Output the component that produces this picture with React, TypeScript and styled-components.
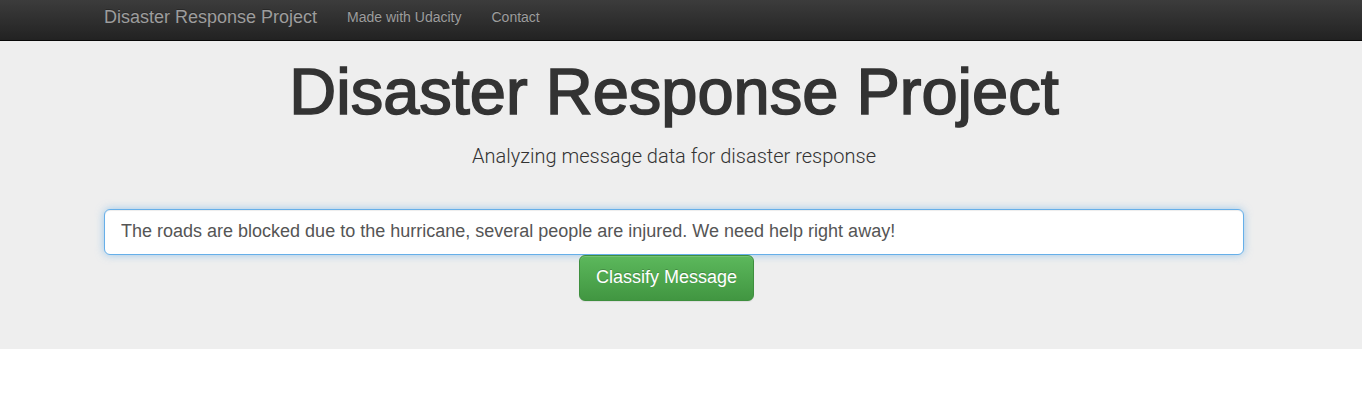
import React from "react";
import styled, { createGlobalStyle } from "styled-components";

const GlobalStyle = createGlobalStyle`
  html, body { margin: 0; padding: 0; background: #fff; }
  body {
    font-family: "Liberation Sans", Arial, sans-serif;
    font-size: 14px;
    line-height: 1.42857;
    color: #333;
  }
  * { box-sizing: border-box; }
`;

const Page = styled.div``;

const Navbar = styled.nav`
  height: 41px;
  background-image: linear-gradient(to bottom, #3c3c3c 0, #222 100%);
  border-bottom: 1px solid #080808;
  padding-right: 14px;
`;

const Container = styled.div`
  width: 1170px;
  margin: 0 auto;
  padding: 0 15px;
`;

const NavInner = styled(Container)`
  display: flex;
  align-items: flex-start;
`;

const Brand = styled.a`
  font-size: 18px;
  line-height: 20px;
  padding: 7px 15px 0 0;
  color: #9d9d9d;
  text-decoration: none;
  text-shadow: 0 -1px 0 rgba(0, 0, 0, 0.25);
`;

const NavList = styled.ul`
  display: flex;
  list-style: none;
  margin: 0;
  padding: 0;
`;

const NavLink = styled.a`
  display: block;
  font-size: 14px;
  line-height: 20px;
  padding: 7px 15px 0;
  color: #9d9d9d;
  text-decoration: none;
  text-shadow: 0 -1px 0 rgba(0, 0, 0, 0.25);
`;

const Jumbotron = styled.section`
  background: #eee;
  padding: 15px 14px 48px 0;
`;

const Title = styled.h1`
  margin: 0;
  text-align: center;
  font-size: 65px;
  line-height: 1.1;
  font-weight: 400;
  color: #333;
  -webkit-text-stroke: 1.6px #333;
`;

const Lead = styled.p`
  margin: 14px 0 0;
  text-align: center;
  font-family: Roboto, "Liberation Sans", sans-serif;
  font-size: 20px;
  font-weight: 300;
  line-height: 1.4;
  color: #333;
`;

const Form = styled.form`
  margin-top: 39px;
  display: flex;
  flex-direction: column;
`;

const Input = styled.input`
  display: block;
  width: 100%;
  height: 46px;
  padding: 10px 16px;
  font-family: "Liberation Sans", Arial, sans-serif;
  font-size: 18px;
  line-height: 1.33;
  color: #555;
  background: #fff;
  border: 1px solid #66afe9;
  border-radius: 6px;
  outline: 0;
  box-shadow: inset 0 1px 1px rgba(0, 0, 0, 0.075), 0 0 8px rgba(102, 175, 233, 0.6);
`;

const ButtonRow = styled.div`
  display: flex;
  padding-left: 475px;
`;

const Button = styled.button`
  height: 46px;
  padding: 10px 16px;
  font-family: "Liberation Sans", Arial, sans-serif;
  font-size: 18px;
  line-height: 1.33;
  color: #fff;
  background-image: linear-gradient(to bottom, #5cb85c 0, #419641 100%);
  border: 1px solid #3e8f3e;
  border-radius: 6px;
  text-shadow: 0 -1px 0 rgba(0, 0, 0, 0.2);
  box-shadow: inset 0 1px 0 rgba(255, 255, 255, 0.15), 0 1px 1px rgba(0, 0, 0, 0.075);
  cursor: pointer;
`;

export default function App() {
  return (
    <Page>
      <GlobalStyle />
      <Navbar>
        <NavInner>
          <Brand href="#">Disaster Response Project</Brand>
          <NavList>
            <li><NavLink href="#">Made with Udacity</NavLink></li>
            <li><NavLink href="#">Contact</NavLink></li>
          </NavList>
        </NavInner>
      </Navbar>
      <Jumbotron>
        <Container>
          <Title>Disaster Response Project</Title>
          <Lead>Analyzing message data for disaster response</Lead>
          <Form onSubmit={(e) => e.preventDefault()}>
            <Input
              type="text"
              defaultValue="The roads are blocked due to the hurricane, several people are injured. We need help right away!"
            />
            <ButtonRow>
              <Button type="submit">Classify Message</Button>
            </ButtonRow>
          </Form>
        </Container>
      </Jumbotron>
    </Page>
  );
}
